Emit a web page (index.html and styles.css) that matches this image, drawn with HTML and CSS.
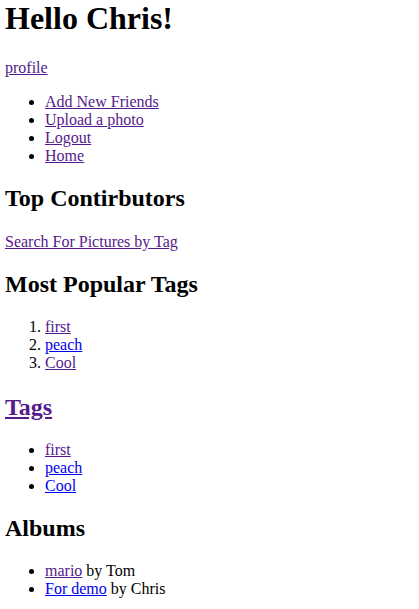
FILE: index.html
```html
<!DOCTYPE html>
<html>
<head>
<meta charset="utf-8">
<title>Hello Chris!</title>
<link rel="stylesheet" href="styles.css">
</head>
<body class="page">
<h1 class="title">Hello Chris!</h1>
<p class="para"><a class="link visited" href="#">profile</a></p>
<ul class="list">
  <li><a class="link visited" href="#">Add New Friends</a></li>
  <li><a class="link visited" href="#">Upload a photo</a></li>
  <li><a class="link visited" href="#">Logout</a></li>
  <li><a class="link visited" href="#">Home</a></li>
</ul>
<h2 class="heading">Top Contirbutors</h2>
<p class="para"><a class="link visited" href="#">Search For Pictures by Tag</a></p>
<h2 class="heading">Most Popular Tags</h2>
<ol class="list">
  <li><a class="link visited" href="#">first</a></li>
  <li><a class="link" href="#">peach</a></li>
  <li><a class="link visited" href="#">Cool</a></li>
</ol>
<h2 class="heading heading-link"><a class="link visited" href="#">Tags</a></h2>
<ul class="list">
  <li><a class="link visited" href="#">first</a></li>
  <li><a class="link" href="#">peach</a></li>
  <li><a class="link" href="#">Cool</a></li>
</ul>
<h2 class="heading">Albums</h2>
<ul class="list">
  <li><a class="link visited" href="#">mario</a> by Tom</li>
  <li><a class="link" href="#">For demo</a> by Chris</li>
</ul>
</body>
</html>
```
FILE: styles.css
```css
.page {
  margin: 0 5px 8px 5px;
  font-family: "Liberation Serif", "Times New Roman", serif;
  font-size: 16px;
  color: #000;
  background: #fff;
}
.title {
  font-size: 32px;
  font-weight: bold;
  margin: 0 0 21.44px 0;
}
.heading {
  font-size: 24px;
  font-weight: bold;
  margin: 19.92px 0;
}
.heading-link {
  margin-top: 22px;
}
.para {
  margin: 16px 0;
  line-height: 19px;
}
.list {
  margin: 16px 0;
  padding-left: 40px;
}
.list li {
  line-height: 18px;
}
.link {
  color: #0000ee;
  text-decoration: underline;
}
.link.visited {
  color: #551a8b;
}
```
